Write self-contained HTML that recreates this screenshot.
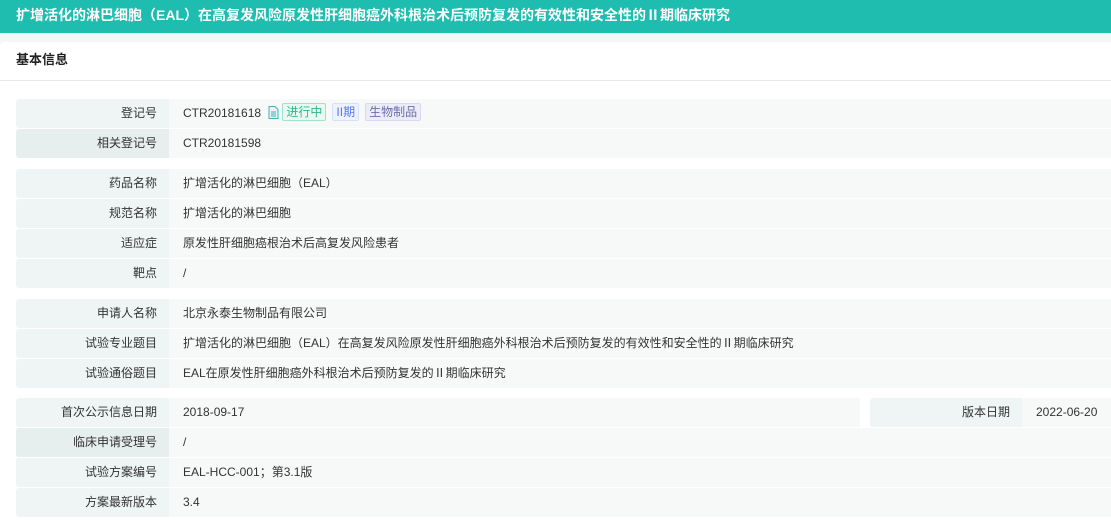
<!DOCTYPE html>
<html><head><meta charset="utf-8"><style>
body{margin:0;width:1111px;height:525px;overflow:hidden;background:#f5f6f7;font-family:"Liberation Sans","Noto Sans CJK SC",sans-serif;font-size:12px;color:#333}
.hd{height:33px;background:#1fbdb0;color:#fff;font-weight:bold;font-size:14px;line-height:31px;padding-left:16px;white-space:nowrap}
.card{position:absolute;top:42px;left:0;width:1111px;height:483px;background:#fff;border-radius:4px 0 0 0}
.st{height:38px;line-height:36px;padding-left:16px;font-weight:bold;font-size:13px;color:#222;border-bottom:1px solid #e6e8ea}
.row{position:absolute;left:16px;width:1095px;height:29px;line-height:29px}
.l{position:absolute;left:0;top:0;width:141px;height:29px;text-align:right;padding-right:12px;background:#eef5f4;border-radius:3px 0 0 3px}
.l.d{background:#e6efee}
.v{position:absolute;left:153px;top:0;right:0;height:29px;padding-left:14px;background:#f7f9f9}
.tag{display:inline-block;height:16px;line-height:16px;padding:0 3px;border:1px solid;border-radius:2px;margin-left:3px;vertical-align:1px}
</style></head><body>
<div class="hd">扩增活化的淋巴细胞（EAL）在高复发风险原发性肝细胞癌外科根治术后预防复发的有效性和安全性的Ⅱ期临床研究</div>
<div class="card"><div class="st">基本信息</div></div>
<div class="row" style="top:99px"><div class="l">登记号</div><div class="v">CTR20181618 <svg width="11" height="13" viewBox="0 0 11 13" style="vertical-align:-2px;margin-left:4px"><path d="M1 .5h6l3 3v9H1z" fill="#eef" stroke="#3ab7a8"/><path d="M3 6h5M3 8h5M3 10h5" stroke="#3ab7a8"/></svg><span class="tag" style="color:#2bb88a;border-color:#9fe3cc;background:#eaf8f3">进行中</span><span class="tag" style="color:#5878f0;border-color:#d6dffc;background:#eef2ff;margin-left:6px">II期</span><span class="tag" style="color:#6d6dac;border-color:#d8d8ee;background:#ececf7;margin-left:6px">生物制品</span></div></div>
<div class="row" style="top:129px"><div class="l d">相关登记号</div><div class="v">CTR20181598</div></div>
<div class="row" style="top:169px"><div class="l">药品名称</div><div class="v">扩增活化的淋巴细胞（EAL）</div></div>
<div class="row" style="top:199px"><div class="l">规范名称</div><div class="v">扩增活化的淋巴细胞</div></div>
<div class="row" style="top:229px"><div class="l">适应症</div><div class="v">原发性肝细胞癌根治术后高复发风险患者</div></div>
<div class="row" style="top:259px"><div class="l">靶点</div><div class="v">/</div></div>
<div class="row" style="top:299px"><div class="l">申请人名称</div><div class="v">北京永泰生物制品有限公司</div></div>
<div class="row" style="top:329px"><div class="l">试验专业题目</div><div class="v">扩增活化的淋巴细胞（EAL）在高复发风险原发性肝细胞癌外科根治术后预防复发的有效性和安全性的Ⅱ期临床研究</div></div>
<div class="row" style="top:359px"><div class="l">试验通俗题目</div><div class="v">EAL在原发性肝细胞癌外科根治术后预防复发的Ⅱ期临床研究</div></div>
<div class="row" style="top:398px"><div class="l">首次公示信息日期</div><div class="v" style="right:251px">2018-09-17</div><div class="l" style="left:854px;width:140px">版本日期</div><div class="v" style="left:1006px">2022-06-20</div></div>
<div class="row" style="top:428px"><div class="l d">临床申请受理号</div><div class="v">/</div></div>
<div class="row" style="top:458px"><div class="l">试验方案编号</div><div class="v">EAL-HCC-001；第3.1版</div></div>
<div class="row" style="top:488px"><div class="l">方案最新版本</div><div class="v">3.4</div></div>
</body></html>
